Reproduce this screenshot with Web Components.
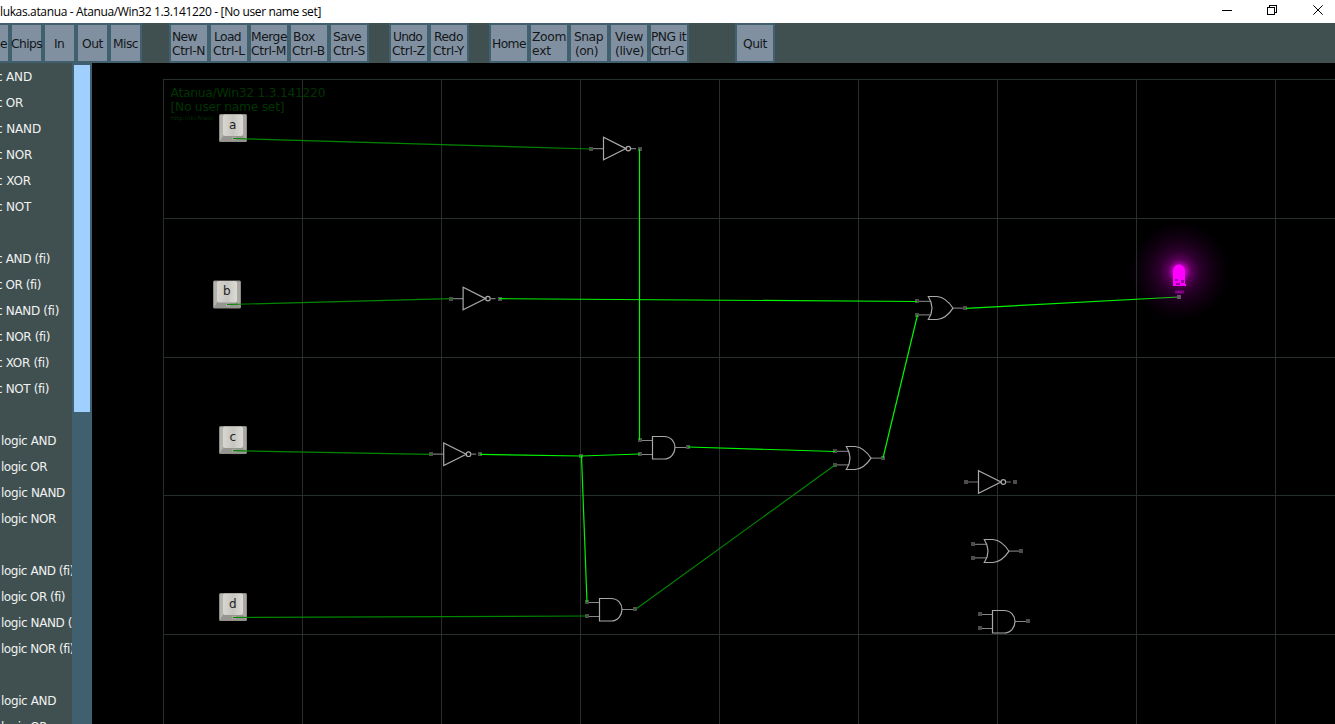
<!DOCTYPE html>
<html lang="en"><head><meta charset="utf-8"><title>Atanua</title>
<style>html,body{margin:0;height:100%;overflow:hidden;background:#000}</style></head>
<body><atanua-app></atanua-app>
<script>
const define=(n,c)=>customElements.define(n,c);
const root=(el,html)=>{const r=el.attachShadow({mode:'open'});r.innerHTML=html;return r};

/* One line of text, tracked so that it fills the width given in `w`. */
define('fit-text',class extends HTMLElement{
  connectedCallback(){
    const r=root(this,'<style>:host{display:block;white-space:pre}span{display:inline-block}</style><span><slot></slot></span>');
    const s=r.querySelector('span'),w=+this.getAttribute('w');
    if(w)s.style.letterSpacing=(w-s.getBoundingClientRect().width)/this.textContent.length+'px';
  }
});

define('title-bar',class extends HTMLElement{
  connectedCallback(){root(this,`<style>
  :host{display:flex;justify-content:space-between;height:23px;background:#fff;color:#000;font:12px/23px "Open Sans",sans-serif}
  svg{display:block;width:119px;height:23px}</style>
  <fit-text w="321">lukas.atanua - Atanua/Win32 1.3.141220 - [No user name set]</fit-text>
  <svg viewBox="1216 0 119 23" fill="none" stroke="#000"><path d="M1222 10.5h10M1267.500 7.500h7v7h-7zM1269.500 7.500v-2h7v7h-2" shape-rendering="crispEdges"/><path d="M1313.300 5.300l9.400 9.400M1322.700 5.300l-9.400 9.400"/></svg>`)}
});

define('tool-button',class extends HTMLElement{
  connectedCallback(){
    const lines=this.getAttribute('lines').split('|').map(l=>{const[t,w,x]=l.split('~');return `<fit-text w="${w}" style="margin-left:${x||0}px">${t}</fit-text>`}).join('');
    root(this,`<style>:host{box-sizing:border-box;display:flex;flex:none;flex-direction:column;justify-content:center;width:40px;height:40px;padding-top:2px;border:2px solid #406070;background:#8090a0;color:#14171a;font:12.3px/14px "DejaVu Sans",sans-serif;white-space:nowrap}
    :host([tab]){width:33px}</style>${lines}`)}
});

define('tool-bar',class extends HTMLElement{
  connectedCallback(){
    const b=(l,t)=>`<tool-button ${t?'tab':''} lines="${l}"></tool-button>`;
    root(this,`<style>:host{display:flex;height:40px;background:#405050;overflow:hidden}
    div{display:flex}.tabs{margin-left:-23px}.file{margin-left:27px}.edit,.view{margin-left:20px}.quit{margin-left:46px}</style>
    <div class="tabs">${b('Base~28~0',1)+b('Chips~31~-1',1)+b('In~10~9',1)+b('Out~21~4',1)+b('Misc~25~2',1)}</div>
    <div class="file">${b('New~25~1|Ctrl-N~33~1')+b('Load~27~3|Ctrl-L~32~2')+b('Merge~36~0|Ctrl-M~35~0')+b('Box~22~2|Ctrl-B~33~1')+b('Save~28~2|Ctrl-S~32~2')}</div>
    <div class="edit">${b('Undo~29~2|Ctrl-Z~33~1')+b('Redo~29~3|Ctrl-Y~31~2')}</div>
    <div class="view">${b('Home~34~1')+b('Zoom~34~1|ext~19~1')+b('Snap~29~3|(on)~23~4')+b('View~28~4|(live)~29~4')+b('PNG it~35~0|Ctrl-G~33~0')}</div>
    <div class="quit">${b('Quit~24~6')}</div>`)}
});

define('chip-list',class extends HTMLElement{
  connectedCallback(){
    const rows=[['AND',32],['OR',23],['NAND',41],['NOR',32],['XOR',31],['NOT',31],0,['AND (fi)',50],['OR (fi)',41],['NAND (fi)',59],['NOR (fi)',50],['XOR (fi)',49],['NOT (fi)',49],0,
      ['logic AND',55],['logic OR',46],['logic NAND',64],['logic NOR',55],0,['logic AND (fi)',73],['logic OR (fi)',64],['logic NAND (fi)',82],['logic NOR (fi)',73],0,['logic AND',55],['logic OR',46]];
    const row=r=>!r?'<p></p>':r[0].startsWith('logic')?`<p class="l"><fit-text w="${r[1]}">${r[0]}</fit-text></p>`:`<p><fit-text w="${r[1]+4}">c ${r[0]}</fit-text></p>`;
    root(this,`<style>:host{display:flex;width:92px;flex:none;overflow:hidden;font:12px/26px "DejaVu Sans",sans-serif;color:#f0f2f2}
    section{box-sizing:border-box;width:72px;padding-top:1px;background:#405050;overflow:hidden}
    p{margin:0 0 0 -4px;height:26px}p.l{margin-left:1px}
    aside{width:20px;box-sizing:border-box;padding:2px;background:#406070}i{display:block;height:347px;background:#a0d0ff}</style>
    <section>${rows.map(row).join('')}</section>
    <aside><i></i></aside>`)}
});

define('circuit-canvas',class extends HTMLElement{
  connectedCallback(){
    const pin=(x,y)=>`<rect x="${Math.round(x)-2}" y="${Math.round(y)-2}" width="4" height="4" fill="#4c4c4c" stroke="none"/>`;
    const g=(x,y,d,pins)=>`<g transform="translate(${x} ${y})">${d}</g>`+pins.map(p=>pin(x+p[0],y+p[1])).join('');
    const not=(x,y)=>g(x,y,'<path d="M0 0H12.500M40 0H45" stroke="#777"/><path d="M12.500-11.300V11.300L35 0Z"/><circle cx="37.300" cy="0" r="2.300"/>',[[0,0],[48.9,0]]);
    const or=(x,y)=>g(x,y,'<path d="M0 0H14M0 13.500H14M36 6.800H48" stroke="#707070"/><path d="M11.300-4.900H20C27-4.200 32 .500 36 6.800C32 13 27 17.700 20 18.100H11.300C16 11 16 2.500 11.300-4.900Z"/>',[[0,0],[0,13.5],[48.4,6.9]]);
    const and=(x,y)=>g(x,y,'<path d="M0 .500H12M0 14.500H12M35 7.500H48" stroke="#888"/><path d="M12.500-3.500H24C31-3.500 35 2 35 7.500S31 19 24 19H12.500Z"/>',[[0,0],[0,14],[48.4,7]]);
    const key=(x,y,t)=>`<g transform="translate(${x} ${y})"><rect width="28" height="28" rx="1.500" fill="#8d8b86"/><path d="M1 1H5V21L1 27Z" fill="#b5b3ae"/><path d="M23 1h4v26l-4-6Z" fill="#aaa8a3"/><path d="M1 27.500L5 21H23L27 27.500Z" fill="#97958f"/><rect x="4" y="0.500" width="20" height="21.500" rx="2" fill="url(#cap)"/><text x="13.800" y="14.500" text-anchor="middle" font-size="12" fill="#222">${t}</text><path d="M13 23h4v3h-4z" fill="#aaa9a4"/></g>`;
    const wire=(c,...p)=>`<polyline points="${p.join(' ')}" stroke="${c}"/>`;
    const hi='#00f400',lo='#008600';
    let grid='';
    for(const x of[163,302,441,580,719,858,997,1136,1275])grid+=`M${x}.5 79V724`;
    for(const y of[79,218,357,495,634])grid+=`M163 ${y}.5H1335`;
    root(this,`<style>:host{display:block;flex:1;min-width:0;background:#000}svg{display:block;width:1243px;height:661px}text{font-family:"DejaVu Sans",sans-serif}</style>
    <svg viewBox="92 63 1243 661"><defs>
    <linearGradient id="cap" x2="1" y2="0"><stop stop-color="#d8d6d0"/><stop offset=".5" stop-color="#c8c6c0"/><stop offset="1" stop-color="#dddbd5"/></linearGradient>
    <radialGradient id="glow"><stop stop-color="#f0f"/><stop offset=".13" stop-color="#d000d0" stop-opacity=".85"/><stop offset=".24" stop-color="#b000b0" stop-opacity=".5"/><stop offset=".4" stop-color="#900090" stop-opacity=".32"/><stop offset=".65" stop-color="#700070" stop-opacity=".18"/><stop offset="1" stop-color="#500050" stop-opacity="0"/></radialGradient></defs>
    <path d="${grid}" stroke="#263029" fill="none" shape-rendering="crispEdges"/>
    <g fill="#003400"><text x="170.500" y="97" font-size="12.300" textLength="155">Atanua/Win32 1.3.141220</text><text x="170.500" y="111" font-size="12.300" textLength="114">[No user name set]</text><text x="170.500" y="120" font-size="5.500" textLength="43">http://iki.fi/sol/</text></g>
    ${key(219,114,'a')+key(213,280.5,'b')+key(219,426,'c')+key(219,593,'d')}
    <g fill="none" stroke="#a8a8a8" stroke-width="1.200">${not(591,148.6)+not(450.6,298.6)+not(431.2,454.2)+not(966,482)+or(917,301.4)+or(835,451.4)+or(973,544.4)+and(640,440)+and(587,602)+and(980,614)}</g>
    ${pin(581,456)}
    <g fill="none" stroke-width="1.200">
    ${wire(lo,233,138.5,591,149)+wire(lo,227,304.5,451,298.7)+wire(lo,233,450.7,431,454.3)+wire(lo,233,617.5,587,616)+wire(lo,636,609,835,465)}
    ${wire(hi,639.5,149,639.5,440)+wire(hi,499,298.7,917,301.5)+wire(hi,480,454.4,581,456,640,454)+wire(hi,581.5,456,587,602)+wire(hi,688,447,835,451.5)+wire(hi,883,458,917.5,315)+wire(hi,966,308.3,1179,297)}
    </g>
    <circle cx="1179.500" cy="271.500" r="50" fill="url(#glow)"/>
    <path d="M1173 286V271a6 6.500 0 0 1 12 0v13h1v2z" fill="#f0f"/><path d="M1175 279h3v2h-3zM1181 280h3v3h-3zM1176 283h4v2h-4z" fill="#a000a8"/>
    <path d="M1175 290.500h9v3h-9z" fill="#760078"/><path d="M1177 291.500h5v1h-5z" fill="#b000b0"/><path d="M1177 295h4v4h-4z" fill="#705070"/>
    </svg>`)}
});

define('atanua-app',class extends HTMLElement{
  connectedCallback(){root(this,`<style>:host{display:flex;flex-direction:column;width:1335px;height:724px;overflow:hidden}main{display:flex;flex:1;min-height:0;overflow:hidden}</style>
  <title-bar></title-bar><tool-bar></tool-bar><main><chip-list></chip-list><circuit-canvas></circuit-canvas></main>`)}
});
</script></body></html>
